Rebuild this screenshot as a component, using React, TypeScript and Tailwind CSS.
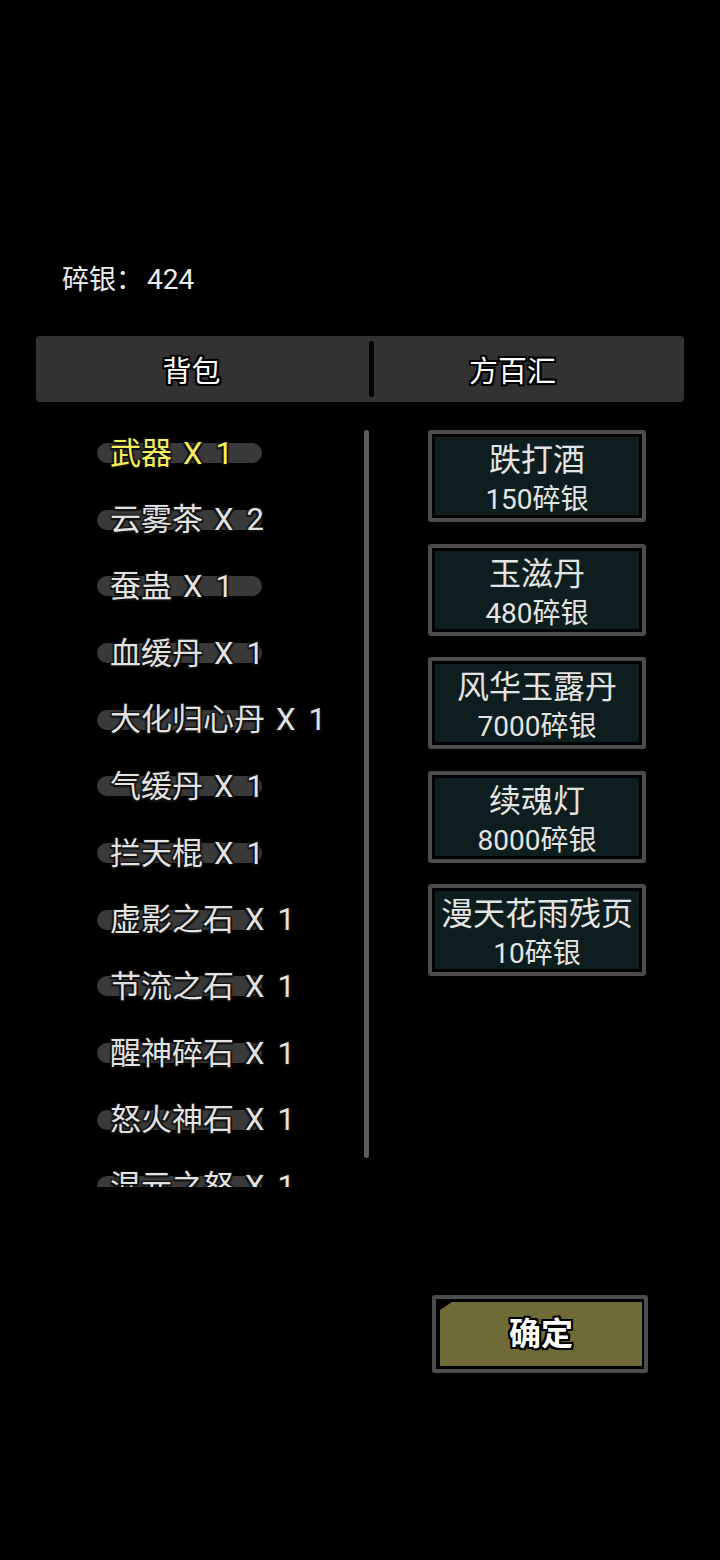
const font = "font-['Roboto','Noto_Sans_CJK_SC',sans-serif]";

const bagItems = [
  { name: "武器", count: 1 },
  { name: "云雾茶", count: 2 },
  { name: "蚕蛊", count: 1 },
  { name: "血缓丹", count: 1 },
  { name: "大化归心丹", count: 1 },
  { name: "气缓丹", count: 1 },
  { name: "拦天棍", count: 1 },
  { name: "虚影之石", count: 1 },
  { name: "节流之石", count: 1 },
  { name: "醒神碎石", count: 1 },
  { name: "怒火神石", count: 1 },
  { name: "混元之怒", count: 1 },
];

const shopItems = [
  { name: "跌打酒", price: 150 },
  { name: "玉滋丹", price: 480 },
  { name: "风华玉露丹", price: 7000 },
  { name: "续魂灯", price: 8000 },
  { name: "漫天花雨残页", price: 10 },
];

const outline =
  "[text-shadow:-2px_-2px_0_#000,2px_-2px_0_#000,-2px_2px_0_#000,2px_2px_0_#000,0_2px_0_#000,0_-2px_0_#000,2px_0_0_#000,-2px_0_0_#000]";
const glow =
  "[text-shadow:-1.5px_-1.5px_1px_#111,1.5px_-1.5px_1px_#111,-1.5px_1.5px_1px_#111,1.5px_1.5px_1px_#111]";

export default function App() {
  return (
    <div className={`min-h-[1560px] w-[720px] bg-black ${font}`}>
      {/* silver */}
      <div className="pt-[263px] pl-[62px] text-[27px] leading-[34px] text-[#ececec]">
        碎银：<span className="ml-[4px] text-[28px]">424</span>
      </div>

      {/* tabs */}
      <div className="mt-[39px] mx-[36px] h-[66px] rounded-[4px] bg-[#323232] flex items-center">
        <div className={`w-[311px] pt-[8px] text-center text-[29px] text-white ${outline}`}>背包</div>
        <div className="w-[22px]" />
        <div className="w-[5px] h-[56px] rounded-full bg-black" />
        <div className={`w-[277px] pt-[8px] text-center text-[29px] text-white ${outline}`}>方百汇</div>
      </div>

      <div className="mt-[18px] flex">
        {/* bag list */}
        <div className="ml-[97px] w-[267px] h-[767px] overflow-hidden">
          {bagItems.map((item, i) => (
            <div key={item.name} className="relative h-[66.67px] flex items-center">
              <div className="absolute left-0 top-[23px] w-[165px] h-[20px] rounded-full bg-[#3a3a3a]" />
              <span
                className={`relative pl-[13px] text-[31px] leading-none whitespace-nowrap ${glow} ${
                  i === 0 ? "text-[#f2ee5c]" : "text-[#e2e2e2]"
                }`}
              >
                {item.name}
                <span className="ml-[11px]">X</span>
                <span className="ml-[13px]">{item.count}</span>
              </span>
            </div>
          ))}
        </div>
        <div className="mt-[10px] w-[5px] h-[728px] rounded-full bg-[#5c5c5c]" />

        {/* shop */}
        <div className="ml-[59px] pt-[10px] w-[218px] flex flex-col gap-[21.5px]">
          {shopItems.map((item) => (
            <div key={item.name} className="h-[92px] rounded-[3px] border-4 border-[#4d4d4d] bg-black p-[3px]">
              <div className="h-full bg-[#0e1d1d] flex flex-col items-center pt-[3px] text-[#e4e4e4]">
                <div className="text-[32px] leading-[40px] whitespace-nowrap">{item.name}</div>
                <div className="mt-[2px] text-[28px] leading-[36px] whitespace-nowrap">{item.price}碎银</div>
              </div>
            </div>
          ))}
        </div>
      </div>

      {/* confirm */}
      <div className="mt-[108px] ml-[432px] w-[216px] h-[78px] rounded-[3px] border-4 border-[#4d4d4d] bg-black pl-[4px] pt-[3px] pr-[2px] pb-[3px]">
        <div className="h-full bg-[#6e6b37] flex items-center justify-center [clip-path:polygon(0_8px,12px_0,100%_0,100%_100%,0_100%)]">
          <span className={`text-[32px] font-bold text-white ${outline}`}>确定</span>
        </div>
      </div>
    </div>
  );
}
